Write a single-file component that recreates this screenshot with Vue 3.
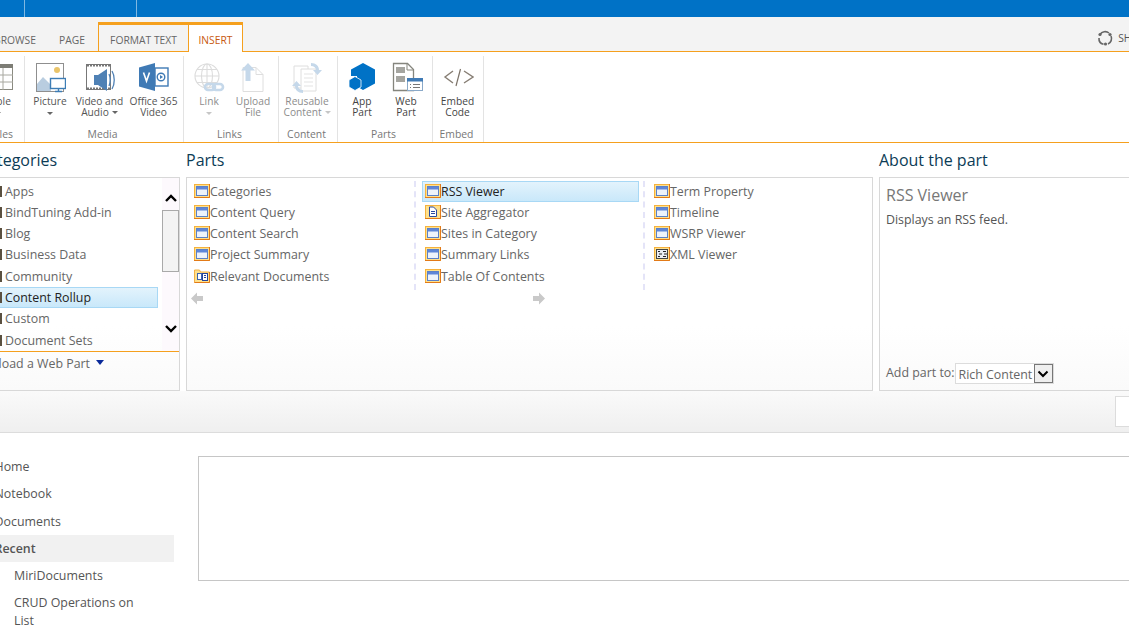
<script setup>
const categories = [
  { name: 'Apps' }, { name: 'BindTuning Add-in' }, { name: 'Blog' }, { name: 'Business Data' },
  { name: 'Community' }, { name: 'Content Rollup', selected: true }, { name: 'Custom' }, { name: 'Document Sets' }
]
const partColumns = [
  [{ name: 'Categories', icon: 'win' }, { name: 'Content Query', icon: 'win' }, { name: 'Content Search', icon: 'win' }, { name: 'Project Summary', icon: 'win' }, { name: 'Relevant Documents', icon: 'folder' }],
  [{ name: 'RSS Viewer', icon: 'win', selected: true }, { name: 'Site Aggregator', icon: 'doc' }, { name: 'Sites in Category', icon: 'win' }, { name: 'Summary Links', icon: 'win' }, { name: 'Table Of Contents', icon: 'win' }],
  [{ name: 'Term Property', icon: 'win' }, { name: 'Timeline', icon: 'win' }, { name: 'WSRP Viewer', icon: 'win' }, { name: 'XML Viewer', icon: 'xml' }]
]
const nav = [
  { name: 'Home', cls: 'top' }, { name: 'Notebook', cls: 'top' }, { name: 'Documents', cls: 'top' },
  { name: 'Recent', cls: 'top recent' }, { name: 'MiriDocuments', cls: 'sub' }, { name: 'CRUD Operations on List', cls: 'sub wrap' }
]
</script>

<template>
  <div class="page">
    <header class="topbar"><i class="tick t1"></i><i class="tick t2"></i></header>

    <nav class="tabs">
      <span class="tab browse">BROWSE</span>
      <span class="tab pagetab">PAGE</span>
      <span class="tab ctx format">FORMAT TEXT</span>
      <span class="tab ctx insert">INSERT</span>
      <span class="share">
        <svg width="16" height="16" viewBox="0 0 16 16"><path d="M3 4.500A6 6 0 0 1 12 3M14 6a6 6 0 0 1-3 8M6.500 14.300A6 6 0 0 1 2 8" fill="none" stroke="#666" stroke-width="1.600"/><circle cx="3" cy="4.500" r="1.600" fill="#666"/><circle cx="13" cy="4.500" r="1.600" fill="#666"/><circle cx="8.500" cy="14" r="1.600" fill="#666"/></svg>
        <span>SHARE</span>
      </span>
    </nav>

    <section class="ribbon">
      <div class="group g-tables">
        <div class="btns tables-btn">
          <div class="rbtn">
            <svg class="ric" width="32" height="32" viewBox="0 0 32 32"><rect x="5.500" y="2.500" width="25" height="25" fill="#fff" stroke="#8a8a80"/><rect x="5" y="2" width="26" height="4" fill="#7d7d75"/><path d="M5 13h26M5 20h26M13 6v22M21 6v22" stroke="#a8a8a0"/></svg>
            <span class="lbl">Table</span><span class="caret"></span>
          </div>
        </div>
        <div class="glabel">Tables</div>
      </div>

      <div class="group g-media">
        <div class="btns">
          <div class="rbtn w-pic">
            <svg class="ric" width="32" height="32" viewBox="0 0 32 32"><rect x="2.500" y="1.500" width="27" height="28" fill="#fff" stroke="#8f8f8f"/><circle cx="23" cy="8" r="3" fill="#e9c46a"/><path d="M3 29V22l6-7 8 8v6z" fill="#b9cde0"/><rect x="16.500" y="16.500" width="15" height="10" fill="#fff" stroke="#3d7db5" stroke-width="1.400"/><path d="M21 29.500h7M24.500 27v2" stroke="#3d7db5" stroke-width="1.400"/></svg>
            <span class="lbl">Picture</span><span class="caret"></span>
          </div>
          <div class="rbtn w-vid">
            <svg class="ric" width="32" height="32" viewBox="0 0 32 32"><rect x="2.500" y="2.500" width="24" height="25" fill="#fff" stroke="#777"/><path d="M3 3.500h24M3 26.500h24" stroke="#777" stroke-width="2" stroke-dasharray="2 1"/><path d="M10 13h4l9-6v22l-9-6h-4z" fill="#4f81b5"/><path d="M25 12c1.500 3 1.500 9 0 12M28 9c3 5 3 13 0 18" fill="none" stroke="#4f81b5" stroke-width="1.300"/></svg>
            <span class="lbl">Video and<br>Audio<span class="caret inl"></span></span>
          </div>
          <div class="rbtn w-off">
            <svg class="ric" width="32" height="32" viewBox="0 0 32 32"><rect x="17" y="6" width="13" height="18" fill="#fff" stroke="#3f7ab5" stroke-width="1.400"/><path d="M1 5.500 17 1v28L1 24.500z" fill="#3f7ab5"/><path d="M5.500 10.500 8.500 19l3-8.500" fill="none" stroke="#fff" stroke-width="1.600"/><circle cx="23" cy="15" r="3.800" fill="none" stroke="#3f7ab5" stroke-width="1.400"/><path d="M22 13v4l3-2z" fill="#3f7ab5"/></svg>
            <span class="lbl">Office 365<br>Video</span>
          </div>
        </div>
        <div class="glabel">Media</div>
      </div>

      <div class="group g-links">
        <div class="btns">
          <div class="rbtn w-link">
            <svg class="ric" width="32" height="32" viewBox="0 0 32 32"><g fill="none" stroke="#dcdcdc" stroke-width="1.100"><circle cx="14" cy="14" r="12"/><ellipse cx="14" cy="14" rx="5.500" ry="12"/><path d="M2 14h24M4 7.500h20M4 20.500h20M14 2v24"/></g><g fill="none" stroke="#c5d8ea" stroke-width="2.600"><rect x="12" y="22" width="10" height="6" rx="3"/><rect x="20" y="22" width="10" height="6" rx="3"/></g></svg>
            <span class="lbl faded">Link</span><span class="caret light"></span>
          </div>
          <div class="rbtn w-up">
            <svg class="ric" width="32" height="32" viewBox="0 0 32 32"><path d="M6 5.500h13l7 7v17H6z" fill="#fff" stroke="#dedede"/><path d="M19 5.500v7h7" fill="none" stroke="#dedede"/><path d="M11 1 4 8.500h4.500V19h5V8.500H18z" fill="#c5d8ea"/></svg>
            <span class="lbl faded">Upload<br>File</span>
          </div>
        </div>
        <div class="glabel">Links</div>
      </div>

      <div class="group g-content">
        <div class="btns">
          <div class="rbtn w-reuse">
            <svg class="ric" width="32" height="32" viewBox="0 0 32 32"><path d="M3 4h14v22H3z" fill="#fff" stroke="#dedede"/><path d="M10 7h15v22H10z" fill="#fff" stroke="#dedede"/><path d="M13 12h9M13 16h9M13 20h9M13 24h9" stroke="#e3e3e3"/><path d="M20 1c5 0 8 3 8 7h3l-4.500 5L22 8h3c0-2-2-4-5-4z" fill="#c5d8ea"/><path d="M12 31c-5 0-8-3-8-7H1l4.500-5L10 24H7c0 2 2 4 5 4z" fill="#c5d8ea"/></svg>
            <span class="lbl faded">Reusable<br>Content<span class="caret inl light"></span></span>
          </div>
        </div>
        <div class="glabel">Content</div>
      </div>

      <div class="group g-parts">
        <div class="btns">
          <div class="rbtn w-app">
            <svg class="ric" width="32" height="32" viewBox="0 0 32 32"><path d="M17 1l12 6.500v14L17 28l-6-3.500V14L5 14V7.500z" fill="#0072c6"/><path d="M9 14.500l6 3.500v7l-6 3.500L3 25v-7z" fill="#0072c6" stroke="#fff" stroke-width=".8"/></svg>
            <span class="lbl dark">App<br>Part</span>
          </div>
          <div class="rbtn w-web">
            <svg class="ric ov" width="32" height="32" viewBox="0 0 32 32"><path d="M3.500 1.500h14l6 6v21h-20z" fill="#fff" stroke="#85857d" stroke-width="1.300"/><path d="M6 5h9v6H6zM6 14h9v6H6z" fill="#a5a5a0"/><path d="M17 2v6h6" fill="none" stroke="#85857d"/><rect x="17.500" y="16.500" width="15" height="12" fill="#fff" stroke="#8aa9c8"/><rect x="17" y="16" width="16" height="3.500" fill="#3f7ab5"/><path d="M20 22.500h1M23 22.500h7M20 25.500h1M23 25.500h7" stroke="#777"/></svg>
            <span class="lbl dark">Web<br>Part</span>
          </div>
        </div>
        <div class="glabel">Parts</div>
      </div>

      <div class="group g-embed">
        <div class="btns">
          <div class="rbtn w-emb">
            <svg class="ric" width="32" height="32" viewBox="0 0 32 32"><path d="M11 9 3 15l8 6M22 9l9 6-9 6" fill="none" stroke="#877e74" stroke-width="1.400"/><path d="M18.500 7 14 24" fill="none" stroke="#7c7268" stroke-width="1.200"/></svg>
            <span class="lbl dark">Embed<br>Code</span>
          </div>
        </div>
        <div class="glabel">Embed</div>
      </div>
    </section>

    <section class="picker">
      <div class="col cats">
        <h2 class="cats-h">Categories</h2>
        <div class="box catbox">
          <div class="catscroll">
            <ul class="catlist">
              <li v-for="c in categories" :key="c.name" :class="['cat', { sel: c.selected }]">
                <i class="catmark"></i><span>{{ c.name }}</span>
              </li>
            </ul>
            <div class="scrollbar">
              <svg class="chev up" width="14" height="9" viewBox="0 0 14 9"><path d="M2 7l5-5 5 5" fill="none" stroke="#000" stroke-width="2.400"/></svg>
              <div class="thumb"></div>
              <svg class="chev down" width="14" height="9" viewBox="0 0 14 9"><path d="M2 2l5 5 5-5" fill="none" stroke="#000" stroke-width="2.400"/></svg>
            </div>
          </div>
          <div class="upload"><span>Upload a Web Part</span><i class="tri"></i></div>
        </div>
      </div>

      <div class="col parts">
        <h2>Parts</h2>
        <div class="box partbox">
          <div class="partcols">
            <ul v-for="(col, i) in partColumns" :key="i" class="partcol">
              <li v-for="p in col" :key="p.name" :class="['part', { sel: p.selected }]">
                <svg class="pic" width="16" height="14" viewBox="0 0 16 14">
                  <template v-if="p.icon === 'folder'">
                    <path d="M.5 3V1h5l1 2h9v10.500H.5z" fill="#fee08c" stroke="#f3b044"/>
                    <path d="M15.500 3v10.500H.5" fill="none" stroke="#e27a18"/>
                    <rect x="3.500" y="4.500" width="4" height="6" fill="#fff" stroke="#3a62b0"/>
                    <rect x="8.500" y="4.500" width="5" height="7" fill="#fff" stroke="#24439a"/>
                    <path d="M10 6.500h2M10 8.500h2" stroke="#24439a"/>
                  </template>
                  <template v-else>
                    <rect width="16" height="14" fill="#f6b23c"/>
                    <rect x="1" y="1" width="14" height="12" fill="#fee08c"/>
                    <path d="M15.500 0v13.500H0" fill="none" stroke="#e27a18"/>
                    <template v-if="p.icon === 'win'">
                      <rect x="2.500" y="2.500" width="11" height="9" fill="#eef3fb" stroke="#5b80c8"/>
                      <rect x="3" y="3" width="10" height="2.500" fill="#5f86d8"/>
                    </template>
                    <template v-else-if="p.icon === 'doc'">
                      <path d="M4.500 2h4l3 3v6.500h-7z" fill="#fff" stroke="#2a4aa0"/>
                      <path d="M6 6.500h4M6 8.500h4" stroke="#2a4aa0"/>
                    </template>
                    <template v-else>
                      <rect x="2.500" y="2.500" width="11" height="9" fill="#e9edf2" stroke="#444"/>
                      <path d="M4 4.500h2M5 7h3M4 9.500h2M9 4.500h3M10 7h3M9 9.500h3" stroke="#222"/>
                    </template>
                  </template>
                </svg><span>{{ p.name }}</span>
              </li>
            </ul>
          </div>
          <div class="pager">
            <svg width="12" height="13" viewBox="0 0 12 13"><path d="M6 .5 0 6.500l6 6V9h6V4H6z" fill="#c9c9c9"/></svg>
            <svg width="12" height="13" viewBox="0 0 12 13"><path d="M6 .5l6 6-6 6V9H0V4h6z" fill="#c9c9c9"/></svg>
          </div>
        </div>
      </div>

      <div class="col about">
        <h2>About the part</h2>
        <div class="box aboutbox">
          <div class="about-title">RSS Viewer</div>
          <div class="about-desc">Displays an RSS feed.</div>
          <div class="addto">
            <span class="addlabel">Add part to:</span>
            <div class="select">
              <span class="select-text">Rich Content</span>
              <span class="select-btn"><svg width="12" height="8" viewBox="0 0 12 8"><path d="M1.500 1.500 6 6l4.500-4.500" fill="none" stroke="#000" stroke-width="2"/></svg></span>
            </div>
          </div>
        </div>
      </div>
    </section>

    <div class="strip"><div class="strip-btn"></div></div>

    <main class="body">
      <ul class="nav">
        <li v-for="n in nav" :key="n.name" :class="n.cls">{{ n.name }}</li>
      </ul>
      <div class="editor"></div>
    </main>
  </div>
</template>

<style>
html, body { margin: 0; overflow: hidden; }
</style>

<style scoped>
* { box-sizing: border-box; }
ul { list-style: none; margin: 0; padding: 0; }
.page {
  width: 1129px; height: 637px; overflow: hidden; background: #fff;
  font-family: "Open Sans", "Noto Sans", sans-serif; color: #666; font-size: 12.4px;
}
.topbar { height: 17px; background: #0072c6; position: relative; }
.tick { position: absolute; top: 0; width: 1px; height: 17px; background: #7fb8e2; }
.t1 { left: 24px; }
.t2 { left: 136px; }

.tabs {
  height: 35px; background: #f3f3f3; border-bottom: 1px solid #f5a01e;
  display: flex; align-items: flex-start; font-size: 10.3px; color: #666; white-space: nowrap;
}
.tab { display: block; height: 29px; margin-top: 5px; padding-top: 11px; }
.browse { margin-left: -6px; width: 65px; }
.pagetab { width: 39px; }
.ctx { border-top: 3px solid #f5a01e; padding-top: 8px; text-align: center; }
.format { width: 90px; border-left: 1px solid #f5a01e; }
.insert { width: 55px; height: 30px; background: #fff; color: #c85a11; border-left: 1px solid #f5a01e; border-right: 1px solid #f5a01e; }
.share { margin-left: auto; margin-right: -21px; display: flex; align-items: center; gap: 5px; padding-top: 13px; color: #555; }

.ribbon { height: 91px; display: flex; border-bottom: 1px solid #f5a01e; }
.group { height: 86px; margin-top: 4px; border-right: 1px solid #e3e3e3; display: flex; flex-direction: column; flex: none; }
.g-tables { width: 25px; overflow: hidden; }
.g-media { width: 159px; }
.g-links { width: 95px; }
.g-content { width: 59px; }
.g-parts { width: 95px; }
.g-embed { width: 51px; }
.btns { display: flex; height: 71px; flex: none; }
.tables-btn { margin-left: -27px; }
.rbtn { display: flex; flex-direction: column; align-items: center; padding-top: 6px; font-size: 10.2px; line-height: 11px; flex: none; width: 50px; text-align: center; white-space: nowrap; }
.ric { flex: none; margin-bottom: 2px; }
.ric.ov { overflow: visible; }
.g-media .w-pic { width: 50px; }
.g-media .w-vid { width: 49px; }
.g-media .w-off { width: 59px; }
.g-links .rbtn { width: 44px; }
.g-links .w-link { margin-left: 3px; }
.g-content .rbtn { width: 56px; }
.g-parts .rbtn { width: 44px; }
.g-parts .w-app { margin-left: 2px; }
.g-embed .rbtn { width: 49px; }
.lbl { color: #555; }
.lbl.dark { color: #444; }
.lbl.faded { color: #8c8c8c; }
.caret { display: block; margin-top: 5px; width: 0; height: 0; border: 3px solid transparent; border-top-color: #666; border-bottom: 0; }
.caret.inl { display: inline-block; margin: 0 0 1px 3px; vertical-align: middle; }
.caret.light { border-top-color: #c6c6c6; }
.glabel { text-align: center; font-size: 10.4px; color: #777; line-height: 14px; padding-right: 3px; }
.g-tables .glabel { text-align: right; padding-right: 11px; white-space: nowrap; margin-left: -20px; }

.picker { display: flex; height: 248px; gap: 6px; flex: none; }
.col { flex: none; display: flex; flex-direction: column; }
.col h2 { margin: 0; height: 34px; padding-top: 6px; font-size: 16px; line-height: 22px; font-weight: 400; color: #0c3c56; white-space: nowrap; }
.cats { width: 180px; }
.cats-h { margin-left: -22px !important; }
.parts { width: 687px; }
.about { width: 300px; }
.box { height: 214px; border: 1px solid #d8d8d8; background: linear-gradient(#fff 70%, #fafafa); }

.catbox { border-left: 0; display: flex; flex-direction: column; }
.catscroll { height: 174px; display: flex; border-bottom: 1px solid #f5a01e; flex: none; }
.catlist { width: 162px; padding-top: 3px; flex: none; }
.cat { height: 21px; width: 158px; line-height: 21px; white-space: nowrap; display: flex; align-items: center; gap: 3px; }
.cat:nth-child(4), .cat:nth-child(7) { height: 22px; padding-bottom: 1px; }
.cat.sel { background: linear-gradient(#e3f3fc, #c9e8fa); border: 1px solid #a8d8f5; border-left: 0; color: #222; }
.catmark { width: 2px; height: 11px; background: #5a5040; flex: none; }
.scrollbar { flex: 1; background: #fdf9fd; display: flex; flex-direction: column; align-items: center; padding-top: 16px; }
.chev { flex: none; }
.thumb { width: 17px; height: 62px; margin-top: 7px; background: #f3f3f3; border: 1px solid #a9a9a9; flex: none; }
.chev.down { margin-top: 52px; }
.upload { margin-left: -18px; display: flex; align-items: center; gap: 4px; height: 23px; white-space: nowrap; }
.tri { width: 0; height: 0; border: 4px solid transparent; border-top: 5px solid #0a2a9a; border-bottom: 0; margin: -2px 0 0 2px; }

.partbox { padding-top: 3px; }
.partcols { display: flex; height: 109px; }
.partcol { width: 229px; flex: none; padding: 0 4px 0 6px; border-right: 2px dashed #e4e4f8; }
.partcol:first-child { padding-left: 7px; }
.partcol:last-child { border-right: 0; }
.part { height: 21px; display: flex; align-items: center; white-space: nowrap; }
.part:nth-child(4) { height: 22px; padding-bottom: 1px; }
.part .pic { flex: none; margin-top: -1px; }
.part.sel { background: linear-gradient(#e3f3fc, #c9e8fa); border: 1px solid #a8d8f5; color: #222; padding-left: 2px; }
.partcol:nth-child(2) .part:not(.sel) { padding-left: 3px; }
.partcol:nth-child(3) { padding-left: 9px; }
.pager { display: flex; padding: 2px 0 0 4px; gap: 330px; }

.aboutbox { padding: 6px 6px 7px; display: flex; flex-direction: column; }
.about-title { font-size: 16px; color: #777; line-height: 22px; }
.about-desc { color: #555; line-height: 18px; margin-top: 5px; }
.addto { margin-top: auto; display: flex; align-items: center; margin-bottom: -1px; }
.addlabel { padding-bottom: 2px; }
.select { width: 99px; height: 21px; border: 1px solid #dcdcdc; background: #fff; display: flex; }
.select-text { width: 78px; padding-left: 3px; line-height: 21px; white-space: nowrap; }
.select-btn { width: 19px; height: 19px; background: #efefef; border: 1px solid #777; display: flex; align-items: center; justify-content: center; }

.strip { height: 42px; background: linear-gradient(#fafafa, #efefef); border-bottom: 1px solid #dcdcdc; padding-top: 5px; display: flex; justify-content: flex-end; }
.strip-btn { width: 14px; height: 31px; background: #fff; border: 1px solid #dcdcdc; border-right: 0; }

.body { display: flex; padding-top: 23px; }
.nav { width: 174px; flex: none; margin-top: -3px; }
.nav li { line-height: 18px; padding: 4.500px 0; min-height: 27px; white-space: nowrap; color: #555; }
.nav li:nth-child(2) { min-height: 28px; }
.nav .top { text-indent: -5.500px; }
.nav .recent { background: #f1f1f1; font-weight: 600; }
.nav .sub { padding-left: 14px; }
.nav .wrap { white-space: normal; padding-right: 30px; }
.editor { width: 1000px; height: 125px; margin-left: 24px; border: 1px solid #c6c6c6; flex: none; }
</style>
